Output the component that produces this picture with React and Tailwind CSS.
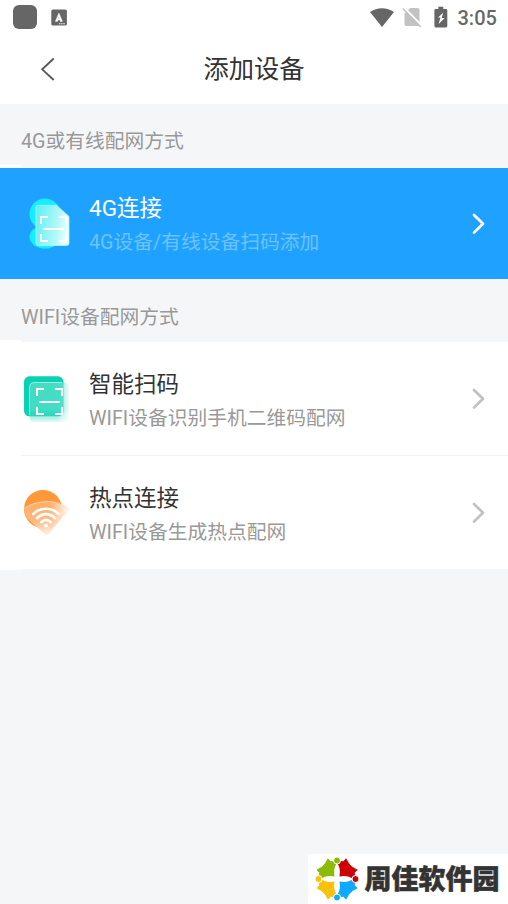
import React from "react";

function StatusBar() {
  return (
    <div className="flex h-[34px] items-center justify-between pl-[13px] pr-[11px]">
      <div className="flex items-center">
        <div className="h-6 w-6 rounded-[6px] bg-[#666]" />
        <svg className="ml-[14px]" width="16" height="17" viewBox="0 0 16 17">
          <rect x="0.3" y="0.4" width="15.6" height="16.2" rx="1.5" fill="#666" />
          <path d="M4.300 12.400 7.900 4 11.500 12.400H9.300L8.800 10.900H7L6.500 12.400ZM7.400 9.400H8.400L7.900 7.800Z" fill="#fff" fillRule="evenodd" stroke="#fff" strokeWidth=".4" />
          <path d="M8 14.700h6.500" stroke="#fff" strokeWidth="1.100" strokeDasharray="1.4 0.8" />
        </svg>
      </div>
      <div className="flex items-center">
        <svg width="26" height="22" viewBox="0 0 26 22">
          <path d="M1 6.100C7.800.8 18.200.8 25 6.100L13 21Z" fill="#666" />
        </svg>
        <svg className="ml-[7px]" width="20" height="22" viewBox="0 0 20 22">
          <path d="M8.200 2H15.500Q17.500 2 17.500 4V20H4.500Q2.500 20 2.500 18V7.500Z" fill="#c2c2c2" />
          <path d="M2.100 1.700 20 20.200" stroke="#fff" strokeWidth="2.200" />
          <path d="M.8 2.500 18.600 20.900" stroke="#c2c2c2" strokeWidth="1.700" />
        </svg>
        <svg className="ml-[12px]" width="14" height="22" viewBox="0 0 14 22">
          <path d="M4.300.8h5v2.100h2.700q1.300 0 1.300 1.300v15.900q0 1.300-1.300 1.300h-10.300q-1.300 0-1.300-1.300v-15.900q0-1.300 1.300-1.300h2.600Z" fill="#666" />
          <path d="M9.200 6.700 4 11.600h2.500L4.600 18l6.200-6.100H7.600Z" fill="#fff" />
        </svg>
        <span className="ml-[9.500px] mt-[2px] w-[39.500px] whitespace-nowrap text-[20px] font-medium leading-6 text-[#686868]">3:05</span>
      </div>
    </div>
  );
}

function ScanMarks({ x, y, w, h }) {
  return (
    <g transform={`translate(${x} ${y})`} fill="none" stroke="#fff" strokeWidth="2">
      <path d={`M0 7V0H7M${w - 7} 0H${w}V7M${w} ${h - 7}V${h}H${w - 7}M7 ${h}H0V${h - 7}`} />
      <path d={`M3 ${Math.ceil(h / 2)}H${w - 3}`} strokeLinecap="round" />
    </g>
  );
}

function SimIcon() {
  return (
    <svg width="50" height="55" viewBox="0 0 50 55">
      <defs>
        <linearGradient id="sim" x1="0" y1="0.4" x2="1" y2="0.6">
          <stop offset="0" stopColor="#65eff7" />
          <stop offset="0.65" stopColor="#b3f8f7" />
          <stop offset="1" stopColor="#f2ffff" />
        </linearGradient>
      </defs>
      <circle cx="23" cy="18" r="15.500" fill="#13effe" />
      <ellipse cx="23" cy="41" rx="15.500" ry="11.500" fill="#13effe" />
      <path d="M16 9.300H34.500L47 20.500V47Q47 49.500 44.500 49.500H16.500Q14 49.500 14 47V11.300Q14 9.300 16 9.300Z" fill="url(#sim)" stroke="#a2fbfe" strokeWidth=".8" />
      <ScanMarks x={19} y={21} w={25} h={24} />
    </svg>
  );
}

function ScanIcon() {
  return (
    <svg width="50" height="56" viewBox="0 0 50 56">
      <defs>
        <linearGradient id="scan" x1="0" y1="0" x2="1" y2="0">
          <stop offset="0" stopColor="#40dcc3" />
          <stop offset="0.72" stopColor="#45ddc4" />
          <stop offset="1" stopColor="#a7eee1" stopOpacity="0.2" />
        </linearGradient>
        <linearGradient id="scanFade" x1="0" y1="0" x2="0" y2="1">
          <stop offset="0.68" stopColor="#fff" />
          <stop offset="0.92" stopColor="#fff" stopOpacity="0.1" />
        </linearGradient>
        <mask id="scanMask"><rect width="50" height="56" fill="url(#scanFade)" /></mask>
      </defs>
      <rect x="2" y="5.300" width="39.500" height="40" rx="5.500" fill="#0ad1b2" />
      <g mask="url(#scanMask)">
        <rect x="7.500" y="11.500" width="39.500" height="39.500" rx="5" fill="url(#scan)" />
        <path d="M7.500 44V16.500Q7.500 11.500 12.500 11.500H40" fill="none" stroke="#a8eee2" strokeWidth="1" />
      </g>
      <ScanMarks x={15} y={18} w={25} h={25} />
    </svg>
  );
}

function HotspotIcon() {
  return (
    <svg width="50" height="56" viewBox="0 0 50 56">
      <defs>
        <linearGradient id="hot" x1="0.45" y1="0" x2="0.65" y2="1">
          <stop offset="0" stopColor="#ffad67" />
          <stop offset="0.55" stopColor="#ffbd86" />
          <stop offset="1" stopColor="#fff6ef" />
        </linearGradient>
        <linearGradient id="hotSide" x1="0" y1="0" x2="1" y2="0">
          <stop offset="0.6" stopColor="#fff" stopOpacity="0" />
          <stop offset="1" stopColor="#fff" stopOpacity="0.95" />
        </linearGradient>
      </defs>
      <circle cx="21" cy="24" r="19" fill="#ff9839" />
      <path d="M2.200 23.500C14 14.500 34 14.500 46.500 23Q47.500 24 46.500 25L26.500 49Q24.500 51 22.500 49L5 33Q2 28 2.200 23.500Z" fill="url(#hot)" />
      <path d="M2.200 23.500C14 14.500 34 14.500 46.500 23Q47.500 24 46.500 25L26.500 49Q24.500 51 22.500 49L5 33Q2 28 2.200 23.500Z" fill="url(#hotSide)" />
      <path d="M2.200 23.500C13 15.500 29 15.500 38 18.500" fill="none" stroke="#ffd2a9" strokeWidth="1" />
      <g fill="none" stroke="#fff" strokeWidth="2.600" strokeLinecap="round">
        <path d="M11.200 29C18.500 22 29.500 22 36.800 29M15 33.200C20.500 27.800 27.500 27.800 33 33.200M19.200 37.200C22.300 34.200 25.700 34.200 28.800 37.200" />
      </g>
      <circle cx="24" cy="40.500" r="2" fill="#fff" />
    </svg>
  );
}

function Chevron({ color }) {
  return (
    <svg width="14" height="22" viewBox="0 0 14 22">
      <path d="M2 2 11 10.800 2 19.600" fill="none" stroke={color} strokeWidth="2.700" strokeLinecap="round" strokeLinejoin="round" />
    </svg>
  );
}

function Row({ icon, title, subtitle, active }) {
  return (
    <div className="flex h-full items-center pl-[22px] pr-[22.500px]">
      {icon}
      <div className="ml-[17px] flex flex-1 flex-col whitespace-nowrap pt-[5px]">
        <span className={`-mt-px mb-px text-[22.500px] leading-[34px] ${active ? "text-white" : "text-[#333]"}`}>{title}</span>
        <span className={`text-[19.750px] leading-[34px] ${active ? "text-[#6dc2ff]" : "text-[#999]"}`}>{subtitle}</span>
      </div>
      <Chevron color={active ? "#ffffff" : "#c1c1c1"} />
    </div>
  );
}

function Petal({ color, angle }) {
  return (
    <g transform={`rotate(${angle} 22 22)`} fill={color}>
      <path d="M13 1.800 15.500 4.500 19.300 4.500 21 8V21H8L4.500 19.300V15.500L1.800 13 7 10 10 7Z" strokeLinejoin="round" stroke={color} strokeWidth=".8" />
    </g>
  );
}

function Watermark() {
  return (
    <div className="flex h-[50px] w-[200px] items-center bg-white pl-[7px]">
      <svg width="44" height="44" viewBox="0 0 44 44">
        <Petal color="#8cba05" angle={0} />
        <Petal color="#ce0007" angle={90} />
        <Petal color="#0eaaff" angle={180} />
        <Petal color="#f8c10b" angle={270} />
        <g fill="#fff">
          <path d="M22 6Q26 11 24.500 19.500Q33 18 38 22Q33 26 24.500 24.500Q26 33 22 38Q18 33 19.500 24.500Q11 26 6 22Q11 18 19.500 19.500Q18 11 22 6Z" />
        </g>
        <g stroke="#fff" strokeWidth="1">
          <circle cx="22" cy="3.500" r="3.500" fill="#8cba05" />
          <circle cx="40.500" cy="22" r="3.500" fill="#ce0007" />
          <circle cx="22" cy="40.500" r="3.500" fill="#0eaaff" />
          <circle cx="3.500" cy="22" r="3.500" fill="#f8c10b" />
        </g>
      </svg>
      <span className="ml-[5.500px] whitespace-nowrap pt-[3px] text-[27px] font-black leading-[47px] text-[#333] [-webkit-text-stroke:0.5px_#333]">周佳软件园</span>
    </div>
  );
}

export default function App() {
  return (
    <div lang="zh-CN" className="flex h-[904px] w-[508px] flex-col overflow-hidden bg-[#f5f6f8] font-['Roboto','Noto_Sans_CJK_SC',sans-serif]">
      <header className="h-[104px] shrink-0 bg-white">
        <StatusBar />
        <div className="grid h-[70px] grid-cols-3 items-center">
          <svg className="ml-[40px]" width="16" height="24" viewBox="0 0 16 24">
            <path d="M13.700 1.500 2.200 12.300 13.700 23" fill="none" stroke="#555" strokeWidth="1.800" />
          </svg>
          <h1 className="pt-[2px] text-center text-[25.300px] leading-[38px] text-[#333]">添加设备</h1>
        </div>
      </header>
      <h2 className="flex h-[64px] shrink-0 flex-col justify-between text-[19.750px] leading-[30px] text-[#999]">
        <span className="pl-[21px] pt-[23px]">4G或有线配网方式</span>
        <span className="flex h-[3px]"><span className="w-[21px] bg-white" /><span className="mt-[2px] flex-1 bg-white" /></span>
      </h2>
      <div className="h-[111px] shrink-0 bg-[#1fa2ff]">
        <Row active icon={<SimIcon />} title="4G连接" subtitle="4G设备/有线设备扫码添加" />
      </div>
      <h2 className="flex h-[63px] shrink-0 flex-col justify-between text-[19.750px] leading-[30px] text-[#999]">
        <span className="pl-[21px] pt-[24px]">WIFI设备配网方式</span>
        <span className="h-[2px] w-[21px] bg-white" />
      </h2>
      <div className="flex h-[228px] shrink-0 flex-col bg-white">
        <div className="h-[113px] pt-px"><Row icon={<ScanIcon />} title="智能扫码" subtitle="WIFI设备识别手机二维码配网" /></div>
        <div className="ml-[21px] h-px bg-[#f1f2f4]" />
        <div className="h-[113px] pt-px"><Row icon={<HotspotIcon />} title="热点连接" subtitle="WIFI设备生成热点配网" /></div>
        <div className="ml-[21px] h-px bg-[#f5f6f8]" />
      </div>
      <footer className="mt-auto flex justify-end"><Watermark /></footer>
    </div>
  );
}
